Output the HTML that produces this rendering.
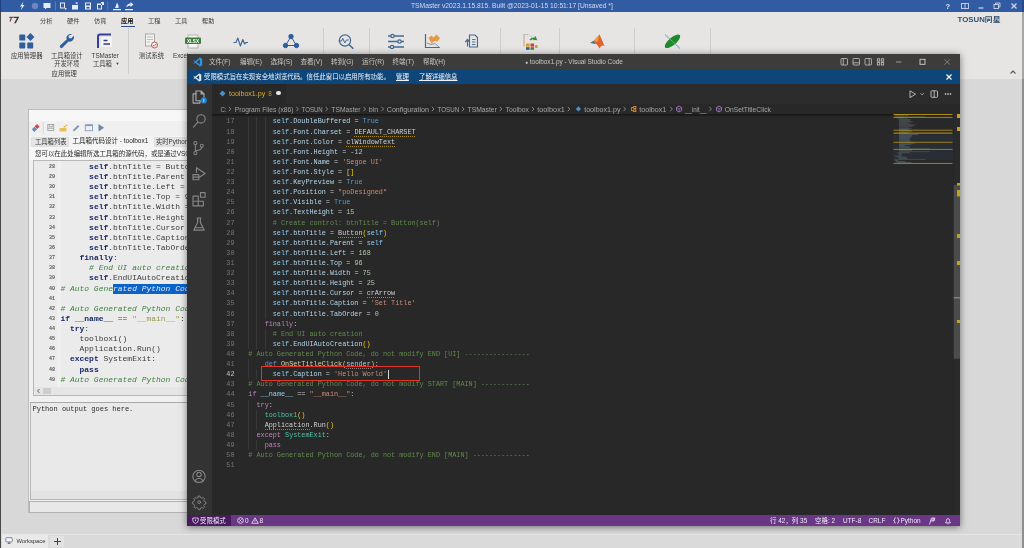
<!DOCTYPE html>
<html><head><meta charset="utf-8">
<style>
*{box-sizing:border-box;margin:0;padding:0}
html,body{width:1024px;height:548px;overflow:hidden;background:#d8d8d8;font-family:"Liberation Sans","Noto Sans CJK SC",sans-serif;}
.abs,.abs>*{position:absolute}
span{white-space:nowrap}
#ts-title{left:0;top:0;width:1024px;height:12px;box-shadow:0 -6px 0 #315ba3,6px -6px 0 #315ba3,-6px -6px 0 #315ba3,6px 0 0 #315ba3,-6px 0 0 #315ba3;background:#315ba3;color:#d4dcee;font-size:6.73px;line-height:12px}
#ts-menu{left:0;top:12px;width:1024px;height:67px;background:#e6e5e3}
.mi{position:absolute;top:15.600px;font-size:6.2px;color:#3a3a3a;line-height:10px}
.rl{position:absolute;font-size:6.3px;color:#3a3a3a;line-height:8px;text-align:center;white-space:nowrap;transform:translateX(-50%)}
.sep{position:absolute;width:1px;background:#cfcecc;top:28px;height:46px}
#ws{left:0;top:79px;width:1024px;height:455px;background:#d8d8d8}
#bottom{left:0;top:534px;width:1024px;height:14px;background:#dadada}
/* inner window */
#inner{left:28px;top:109px;width:900px;height:404px;background:#f0f0f0;border:1px solid #bdbdbd}
.code1{position:absolute;left:60.4px;font-family:"Liberation Mono",monospace;font-size:7.98px;line-height:10.1px;height:10.1px;white-space:pre;color:#3c3c3c}
.code1 b{color:#1c2a66}
.cm{color:#3f7f3f;font-style:italic}
.st{color:#9a9a50}
.un{text-decoration:underline;text-decoration-color:#2a3a9a}
.sel{background:#0a63c9;color:#dfe8f5;display:inline-block;height:10.1px}
.ln1{position:absolute;left:36px;font-family:"Liberation Mono",monospace;font-size:5px;font-weight:bold;line-height:10.1px;color:#555;text-align:right;width:19px}
/* vscode */
#vs{left:187px;top:54px;width:773px;height:472px;background:#282828;box-shadow:0 1px 7px rgba(0,0,0,.5)}
#vs-title{left:0;top:0;width:773px;height:16px;background:#3c3c3c;color:#c8c8c8;font-size:6.55px;line-height:16px}
#vs-banner{left:0;top:16px;width:773px;height:13.5px;background:#0f4679;color:#f0f4f8;font-size:6.41px;line-height:13.5px}
#vs-act{left:0;top:29.5px;width:25px;height:431.500px;background:#333333}
#vs-tabs{left:25px;top:29.5px;width:748px;height:20px;background:#2c2c2c}
#vs-bc{left:25px;top:49.5px;width:748px;height:11px;background:#282828;color:#a4a4a4;font-size:6.92px;line-height:11px;white-space:nowrap}
#vs-status{left:0;top:460.800px;width:773px;height:11.200px;background:#6a3787;color:#f2eaf6;font-size:6.45px;line-height:11.400px}
.vcode{position:absolute;left:61.3px;font-family:"Liberation Mono",monospace;font-size:6.81px;line-height:10.11px;height:10.11px;white-space:pre;color:#cfcfcf}
.vln{position:absolute;left:27px;font-family:"Liberation Mono",monospace;font-size:6.81px;line-height:10.11px;color:#767676;text-align:right;width:20.5px;white-space:pre}
.vln.cur{color:#c6c6c6}
.s{color:#8fcdf4}.p{color:#b4d6ea}.k{color:#c080bc}.c{color:#608a4c}.t{color:#5596cf}.str{color:#c98d74}.n{color:#b0c8a4}.y{color:#f2cc10}.f{color:#d6d6a4}.cl{color:#4cc2aa}
.u{background:repeating-linear-gradient(90deg,#a88a10 0 1px,transparent 1px 2px) 0 100%/100% 1px no-repeat;padding-bottom:1px}
.u2{background:repeating-linear-gradient(90deg,#808080 0 1px,transparent 1px 2px) 0 100%/100% 1px no-repeat;padding-bottom:1px}
.guide{position:absolute;width:1px;background:#383838}
#root{position:absolute;left:-6px;top:-6px;width:1036px;height:560px;overflow:hidden;filter:blur(.35px);background:#d8d8d8}
#pg{position:absolute;left:6px;top:6px;width:1024px;height:548px}
</style></head><body><div id="root"><div id="pg">
<!-- ======== TSMaster main ======== -->
<div id="ts-title" class="abs"><span style="left:411px">TSMaster v2023.1.15.815. Built @2023-01-15 10:51:17 [Unsaved *]</span>
<svg style="left:0;top:0" width="140" height="12" viewBox="0 0 140 12" fill="#e4eaf6">
<path d="M23.5 1.5 L20 6.5 H22 L20.5 10.5 L24.5 5 H22.4 Z"/>
<circle cx="35" cy="6" r="3.2" fill="#6c86c0"/>
<path d="M43.5 3 h7 v5 h-4 l-1.5 1.6 v-1.6 h-1.5 Z"/>
<rect x="55" y="1.5" width=".7" height="9" fill="#6f89c2"/>
<path d="M60 2.5 h5 v6 h-5 Z M61 3.5 v4 h3 v-4 Z M65 8 h1.5 v1.5 H65 Z"/>
<path d="M72 5 h6 v4.5 h-6 Z M75 3 l2.5 -1 v2.5 Z"/>
<path d="M85 2.5 h6 v7 h-6 Z M86 3.5 v2 h4 v-2 Z M86.5 7 v1.5 h3 V7 Z" fill-rule="evenodd"/>
<path d="M97 3.5 h5 v6 h-5 Z M98 5 v3.5 h3 V5 Z M101 2 h3 v3 h-3 Z" fill-rule="evenodd"/>
<rect x="107.5" y="1.5" width=".7" height="9" fill="#6f89c2"/>
<path d="M113 9 h8 v1.2 h-8 Z M115 8 l2 -5.5 l1.5 3 v2.5 Z"/>
<path d="M125 9 h8 v1.2 h-8 Z M126 7.5 q1 -4 4.5 -4 v-1.5 l3 2.5 l-3 2.5 v-1.5 q-2.5 0 -4.5 2 Z"/>
</svg>
<svg style="left:936px;top:0" width="88" height="12" viewBox="936 0 88 12" fill="none" stroke="#cdd7ec" stroke-width=".9">
<text x="945.5" y="9" font-size="7.5" font-weight="bold" fill="#e4eaf6" stroke="none" font-family="Liberation Sans, sans-serif">?</text>
<rect x="961.5" y="3.5" width="7" height="5"/><path d="M965 3.5 v5"/>
<path d="M978.5 8 h5" stroke-width="1.2"/>
<rect x="994" y="4.5" width="4.5" height="4"/><path d="M995.5 4.5 v-1.5 h4.5 v4 h-1.5"/>
<path d="M1011.5 3.5 l5 5 M1016.5 3.5 l-5 5" stroke-width="1.3"/>
</svg>
</div>
<div id="ts-menu" class="abs"></div>
<svg class="abs" style="left:8px;top:14px" width="16" height="12" viewBox="0 0 16 12"><path d="M1.500 2.700 h4 l-.4 1.200 h-1.200 l-1.100 3.600 h-1.300 l1.100 -3.600 h-1.500 Z" fill="#7a4644"/><path d="M5.800 2.700 h5.500 l-3.500 6.600 h-1.700 l2.800 -5.300 h-3.500 Z" fill="#3a3a3a"/></svg>
<span class="mi" style="left:40px">分析</span><span class="mi" style="left:67px">硬件</span><span class="mi" style="left:94px">仿真</span><span class="mi" style="left:121px;color:#111;font-weight:bold">应用</span><span class="mi" style="left:148px">工程</span><span class="mi" style="left:175px">工具</span><span class="mi" style="left:202px">帮助</span>
<div class="abs" style="left:120.5px;top:26px;width:14px;height:1.3px;background:#2f4c8e"></div>
<!-- ribbon icons -->
<svg class="abs" style="left:0;top:28.900px" width="1024" height="26" viewBox="0 28 1024 26">
<g fill="#2f5f9a" transform="translate(26.300 39.500) scale(1.060) translate(-26.100 -39.100)"><rect x="19.5" y="33.5" width="5.6" height="5.6" rx=".8"/><rect x="19.5" y="41" width="5.6" height="5.6" rx=".8"/><rect x="27" y="41" width="5.6" height="5.6" rx=".8"/><path d="M30 32 l3.8 3.8 l-3.8 3.8 l-3.8 -3.8 Z"/></g>
<path d="M72.2 33.2 a4.3 4.3 0 0 0 -5.6 5.3 l-6.3 5.8 a1.6 1.6 0 0 0 2.3 2.3 l5.9 -6.2 a4.3 4.3 0 0 0 5.3 -5.6 l-2.7 2.7 l-2.1 -.6 l-.6 -2.1 Z" fill="#2f5f9a"/>
<g transform="translate(1 0)"><path d="M97 47 V35.5 a2 2 0 0 1 2 -2 H110" fill="none" stroke="#3340a0" stroke-width="2"/><rect x="100" y="36" width="11" height="10" rx="1" fill="#f4f4f8"/><path d="M102.5 39.5 h4 M102.5 43 h6.5" stroke="#333c7a" stroke-width="1.3"/></g>
<g><rect x="145.5" y="33" width="9" height="12" fill="#f2f2f0" stroke="#9a9a98" stroke-width=".8"/><path d="M147 36 h6 M147 38.5 h6 M147 41 h3" stroke="#aaa" stroke-width=".7"/><circle cx="154.5" cy="44" r="3" fill="#f2f2f0" stroke="#c0463a" stroke-width=".9"/><path d="M153 44 l1.2 1.2 l2 -2.3" stroke="#c0463a" stroke-width=".8" fill="none"/></g>
<g><rect x="188" y="34" width="10" height="13" fill="#f4f4f2" stroke="#9a9a98" stroke-width=".7"/><rect x="185" y="36.5" width="16" height="6.5" rx="1" fill="#3f7d3d"/><text x="193" y="41.8" font-size="4.6" font-weight="bold" fill="#fff" text-anchor="middle" font-family="Liberation Sans, sans-serif">XLSX</text></g>
<path d="M233.5 41.5 h2.5 l1.8 -4.5 l2.6 8 l2.4 -6.5 l1.8 4.5 l1.4 -1.5 h2" fill="none" stroke="#3f6690" stroke-width="1.150" stroke-linejoin="round"/>
<g stroke="#2f5f9a" stroke-width="1" fill="#2f5f9a"><path d="M291 35.5 L285.5 44.5 H296.5 Z" fill="none"/><circle cx="291" cy="35.5" r="2.2"/><circle cx="285.5" cy="44.5" r="2.2"/><circle cx="296.5" cy="44.5" r="2.2"/></g>
<g fill="none" stroke="#456a92" stroke-width="1.2"><circle cx="345" cy="39.5" r="5.6"/><path d="M349.3 43.8 l4 4" stroke-width="1.6"/><path d="M338.5 40 h3 l1.3 -2.6 l2 4.6 l1.6 -3 h2.4" stroke-width="1"/></g>
<g stroke="#456a92" stroke-width="1.3" fill="#e6e5e3"><path d="M388 35 h16 M388 40.5 h16 M388 46 h16"/><circle cx="392.5" cy="35" r="1.7"/><circle cx="399.5" cy="40.5" r="1.7"/><circle cx="392" cy="46" r="1.7"/></g>
<g><path d="M425.5 33 v13.5 h14.5" fill="none" stroke="#456a92" stroke-width="1.2"/><path d="M428.5 37 l3 -2.5 l2 2 l3 -3 l3.5 3.5 l-2.5 3.5 l-3 -.5 l-3 2.5 Z" fill="#e69a48"/><path d="M427 42 l4 1.5 l4 -1 l4.5 4" fill="none" stroke="#7d93b8" stroke-width="1"/></g>
<g fill="none" stroke="#456a92" stroke-width="1.1"><path d="M469.5 34 h5.5 l2.5 2.5 v9.5 h-8 Z"/><path d="M472 38.5 h3.5 M472 41 h3.5 M472 43.5 h3.5" stroke-width=".9"/><path d="M467.500 45.500 v-6 M465.200 41.200 L467.500 38.500 l2.300 2.700" stroke-width="1.200"/></g>
<g><path d="M524 33.5 h5 l2.5 2.5 v4" fill="none" stroke="#a0a09e" stroke-width=".8" stroke-dasharray="1.5 1"/><path d="M524 33.5 v12" fill="none" stroke="#c98a6a" stroke-width=".8"/><path d="M530 39 q3 -3 6 -1 l-1 -2.5 M536 38 l-2.7 .6" stroke="#3d8a3a" stroke-width="1.4" fill="none"/><rect x="526" y="42.5" width="3.6" height="3.2" fill="#d0a030"/><rect x="530.5" y="42.5" width="3.6" height="3.2" fill="#d04040"/><rect x="526" y="46.2" width="3.6" height="2.6" fill="#3a5aa0"/><rect x="530.5" y="46.2" width="3.6" height="2.6" fill="#3a8a3a"/><rect x="535" y="44" width="2.6" height="3" fill="#d0a030"/></g>
<g><path d="M590 42 l4 -2.5 l2 3.5 Z" fill="#4a6a8a"/><path d="M594 39.500 L599.500 33.500 L604.500 45.500 Q601.500 43 599.500 47.500 Q597.500 43.500 596 43 Z" fill="#e2622a"/><path d="M599.500 33.500 L604.500 45.500 Q602 41 599.500 33.500" fill="#b83a1a"/><path d="M594 39.500 L599.500 33.500 L597.500 41 Z" fill="#f0a040"/></g>
<g><path d="M665 33.500 l15 14" stroke="#a4b0d4" stroke-width="1.100"/><ellipse cx="672.500" cy="40.300" rx="9.600" ry="3.700" transform="rotate(-40 672.500 40.300)" fill="#1f8a2c"/><path d="M669 37.200 l7.500 7" stroke="#8fc49a" stroke-width=".6"/></g>
</svg>
<span class="rl" style="left:26.7px;top:52.400px">应用管理器</span>
<span class="rl" style="left:66.8px;top:52.400px">工具箱设计<br>开发环境</span>
<span class="rl" style="left:105.2px;top:52.400px">TSMaster<br>工具箱 <span style="font-size:4px;position:relative;top:-1px;left:2px">▼</span></span>
<span class="rl" style="left:64.2px;top:69.8px">应用管理</span>
<span class="rl" style="left:151.5px;top:52.400px">测试系统</span>
<span class="rl" style="left:173px;top:52.400px;transform:none">Excel</span>
<div class="sep" style="left:128px"></div><div class="sep" style="left:323px"></div><div class="sep" style="left:369px"></div><div class="sep" style="left:500px"></div><div class="sep" style="left:559px"></div><div class="sep" style="left:634px"></div><div class="sep" style="left:710px"></div>
<svg class="abs" style="left:955px;top:13px" width="50" height="12" viewBox="955 13 50 12"><text x="957.5" y="21.6" font-size="7" font-weight="bold" fill="#34506e" font-family="Liberation Sans, Noto Sans CJK SC, sans-serif" textLength="43" lengthAdjust="spacingAndGlyphs">TOSUN同星</text></svg>
<svg class="abs" style="left:1008px;top:68px" width="10" height="8" viewBox="0 0 10 8"><path d="M2.500 5.500 L5 3 L7.500 5.500" fill="none" stroke="#555" stroke-width="1.1"/></svg>
<div id="ws" class="abs"></div>
<!-- inner window -->
<div id="inner" class="abs">
 <div style="left:0;top:0;width:898px;height:10.500px;background:#f7f7f7"></div>
</div>
<div class="abs" style="left:29px;top:135.500px;width:160px;height:11px;background:#f4f4f4">
 <div style="left:1.500px;top:1px;width:38px;height:10px;background:#e5e5e5;border:1px solid #dedede"></div>
 <div style="left:124.500px;top:1px;width:60px;height:10px;background:#e5e5e5;border:1px solid #dedede"></div>
 <span style="left:6px;top:1.500px;font-size:6.3px;line-height:9px;color:#333">工具箱列表</span>
 <span style="left:43.500px;top:.5px;font-size:6.5px;line-height:9px;color:#222">工具箱代码设计 - toolbox1</span>
 <span style="left:127px;top:1.500px;font-size:6.3px;line-height:9px;color:#333">实时Python</span>
</div>
<div class="abs" style="left:29px;top:146.500px;width:160px;height:13px;background:#f6f6f6"><span style="left:6px;top:2px;font-size:6.45px;line-height:9px;color:#2a2a2a">您可以在此处编辑所选工具箱的源代码，或是通过VSCode</span></div>
<svg class="abs" style="left:29px;top:121px" width="80" height="14" viewBox="29 121 80 14">
<path d="M31.800 129.300 l2.600 -2.600 l2.600 2.600 l-2.600 2.600 Z" fill="#6a88c4"/><path d="M34.600 126.500 l2.400 -2.400 l2.600 2.600 l-2.400 2.400 Z" fill="#d8444a"/>
<rect x="42.800" y="122" width=".7" height="12" fill="#cacaca"/>
<g fill="none" stroke="#9c9c9c" stroke-width=".8"><rect x="47.800" y="124.500" width="6" height="6"/><path d="M49.300 124.500 v2.300 h3 v-2.300 M47.800 128.300 h6"/></g>
<path d="M59.500 128 h7 v3.500 h-7 Z" fill="#e8c05a"/><path d="M63 127 l2.500 -1.800 v2.600 Z M66 124.800 h1.300 v1.300 h-1.300 Z" fill="#e0aa3a"/>
<path d="M73 131.300 l.6 -2 l4.400 -4.400 l1.400 1.400 l-4.400 4.400 Z" fill="#8498b4"/>
<rect x="85.300" y="124.700" width="7.200" height="6" fill="#eef0f4" stroke="#8a9cb8" stroke-width=".9"/><rect x="85.300" y="124.700" width="7.200" height="1.400" fill="#8a9cb8"/>
<path d="M98.500 124 l5.600 3.800 l-5.600 3.800 Z" fill="#6a88ac"/>
</svg>
<div class="abs" style="left:32.500px;top:159.500px;width:160px;height:236px;background:#ebebeb;border:1px solid #b8b8b8">
 <div style="left:23px;top:0;width:4px;height:226.500px;background:#f0f0f0"></div>
</div>
<div class="ln1" style="top:161.95px">28</div><div class="code1" style="top:161.95px">      <b>self</b>.btnTitle = Button(<b>self</b>)</div>
<div class="ln1" style="top:172.08px">29</div><div class="code1" style="top:172.08px">      <b>self</b>.btnTitle.Parent = <b>self</b></div>
<div class="ln1" style="top:182.21px">30</div><div class="code1" style="top:182.21px">      <b>self</b>.btnTitle.Left = 168</div>
<div class="ln1" style="top:192.34px">31</div><div class="code1" style="top:192.34px">      <b>self</b>.btnTitle.Top = 96</div>
<div class="ln1" style="top:202.47px">32</div><div class="code1" style="top:202.47px">      <b>self</b>.btnTitle.Width = 75</div>
<div class="ln1" style="top:212.60px">33</div><div class="code1" style="top:212.60px">      <b>self</b>.btnTitle.Height = 25</div>
<div class="ln1" style="top:222.73px">34</div><div class="code1" style="top:222.73px">      <b>self</b>.btnTitle.Cursor = crArrow</div>
<div class="ln1" style="top:232.86px">35</div><div class="code1" style="top:232.86px">      <b>self</b>.btnTitle.Caption = 'Set Title'</div>
<div class="ln1" style="top:242.99px">36</div><div class="code1" style="top:242.99px">      <b>self</b>.btnTitle.TabOrder = 0</div>
<div class="ln1" style="top:253.12px">37</div><div class="code1" style="top:253.12px">    <b>finally</b>:</div>
<div class="ln1" style="top:263.25px">38</div><div class="code1" style="top:263.25px">      <span class="cm"># End UI auto creation</span></div>
<div class="ln1" style="top:273.38px">39</div><div class="code1" style="top:273.38px">      <b>self</b>.EndUIAutoCreation()</div>
<div class="ln1" style="top:283.51px">40</div><div class="code1" style="top:283.51px"><span class="cm"># Auto Gene<span class="sel">rated Python Code, do not modify END [UI] ----------------</span></span></div>
<div class="ln1" style="top:293.64px">41</div><div class="code1" style="top:293.64px"></div>
<div class="ln1" style="top:303.77px">42</div><div class="code1" style="top:303.77px"><span class="cm"># Auto Generated Python Code, do not modify START [MAIN] ------------</span></div>
<div class="ln1" style="top:313.90px">43</div><div class="code1" style="top:313.90px"><b>if</b> <b>__name__</b> == <span class="st">"__main__"</span>:</div>
<div class="ln1" style="top:324.03px">44</div><div class="code1" style="top:324.03px">  <b>try</b>:</div>
<div class="ln1" style="top:334.16px">45</div><div class="code1" style="top:334.16px">    toolbox1()</div>
<div class="ln1" style="top:344.29px">46</div><div class="code1" style="top:344.29px">    Application.Run()</div>
<div class="ln1" style="top:354.42px">47</div><div class="code1" style="top:354.42px">  <b>except</b> SystemExit:</div>
<div class="ln1" style="top:364.55px">48</div><div class="code1" style="top:364.55px">    <b>pass</b></div>
<div class="ln1" style="top:374.68px">49</div><div class="code1" style="top:374.68px"><span class="cm"># Auto Generated Python Code, do not modify END [MAIN] --------------</span></div>

<div class="abs" style="left:33.500px;top:387px;width:156px;height:7.500px;background:#e5e5e5"><div style="left:9px;top:.5px;width:8.500px;height:6.500px;background:#cdcdcd"></div><svg style="left:2px;top:1px" width="5" height="6" viewBox="0 0 5 6"><path d="M3.500 1 L1.500 3 L3.500 5" fill="none" stroke="#555" stroke-width=".9"/></svg></div>
<div class="abs" style="left:29.500px;top:401.500px;width:160px;height:98.500px;background:#e9e9e9;border:1px solid #b4b4b4;border-top-color:#a8a8a8">
 <span style="left:2px;top:2.200px;font-family:'Liberation Mono',monospace;font-size:7px;line-height:9px;color:#2a2a2a">Python output goes here.</span>
 <div style="left:0;top:88px;width:158px;height:8.500px;background:#e3e3e3"></div>
</div>
<div class="abs" style="left:28.500px;top:501px;width:160px;height:11.500px;background:#e8e8e8;border:1px solid #b0b0b0;border-right:0"></div>
<!-- bottom tabs -->
<div id="bottom" class="abs">
 <div style="left:0;top:0;width:1024px;height:1px;background:#e6e6e6"></div>
 <div style="left:1.500px;top:1px;width:46.500px;height:13px;background:#e9e9e9"></div>
 <div style="left:50px;top:1.500px;width:14px;height:11px;background:#e2e2e2"></div>
 <svg style="left:4.800px;top:3.200px" width="8.500" height="7.650" viewBox="0 0 10 9"><rect x="1" y=".8" width="7.500" height="5" rx=".8" fill="#f4f6fa" stroke="#5a6a82" stroke-width=".9"/><path d="M3.200 7.500 h3.200 M4.800 6 v1.500" stroke="#4a5568" stroke-width="1"/></svg>
 <span style="left:16.500px;top:2.500px;font-size:5.800px;line-height:9px;color:#333">Workspace</span>
 <svg style="left:52.500px;top:2.500px" width="9" height="9" viewBox="0 0 9 9"><path d="M4.500 1 v7 M1 4.500 h7" stroke="#2f4f3f" stroke-width="1"/></svg>
</div>
<div class="abs" style="left:-6px;top:12px;width:7px;height:542px;background:#484848"></div><div class="abs" style="left:-6px;top:-6px;width:7px;height:18px;background:#1f3f7c"></div>
<div class="abs" style="left:1022.200px;top:12px;width:8px;height:67px;background:#a6a6a6"></div><div class="abs" style="left:1022.200px;top:79px;width:8px;height:475px;background:#8e8e8e"></div><div class="abs" style="left:1022.200px;top:-6px;width:8px;height:18px;background:#27498a"></div>
<!-- ======== VS Code ======== -->
<div id="vs" class="abs">
<div id="vs-title" class="abs">
 <svg style="left:5.500px;top:3px" width="10" height="10" viewBox="0 0 10 10"><path d="M7.300 1.200 L2.500 5 L7.300 8.800" fill="none" stroke="#2f95e0" stroke-width="1.500"/><path d="M6.800 .6 L9.200 1.700 V8.300 L6.800 9.400 Z" fill="#2f95e0"/><path d="M.7 3.600 L2.700 5 L.7 6.400" fill="none" stroke="#2f95e0" stroke-width="1"/></svg>
 <span style="left:22px">文件(F)</span><span style="left:53px">编辑(E)</span><span style="left:83.500px">选择(S)</span><span style="left:113.500px">查看(V)</span><span style="left:144px">转到(G)</span><span style="left:175px">运行(R)</span><span style="left:205.500px">终端(T)</span><span style="left:236px">帮助(H)</span>
 <span style="left:338px;font-size:6.43px"><span style="position:relative;font-size:5px;top:-.5px">●</span> toolbox1.py - Visual Studio Code</span>
 <svg style="left:650px;top:0" width="123" height="16" viewBox="650 0 123 16" fill="none" stroke="#c4c4c4" stroke-width=".8">
  <rect x="654" y="4.500" width="6.500" height="6.500" rx=".8"/><path d="M656.300 4.500 v6.500"/>
  <rect x="666" y="4.500" width="6.500" height="6.500" rx=".8"/><path d="M666 8.800 h6.500"/>
  <rect x="678" y="4.500" width="6.500" height="6.500" rx=".8"/><path d="M682.200 4.500 v6.500"/>
  <rect x="690.300" y="4.800" width="2.400" height="2.400"/><rect x="690.300" y="8.600" width="2.400" height="2.400"/><rect x="694.300" y="4.800" width="2.400" height="2.400"/><rect x="694.300" y="8.600" width="2.400" height="2.400"/>
  <path d="M709 8 h5.500" stroke="#b0b0b0"/><rect x="733" y="5.300" width="5" height="5" stroke="#d0d0d0" stroke-width=".9"/><path d="M757.500 5.300 l5.400 5.400 M762.900 5.300 l-5.400 5.400" stroke="#9a9a9a" stroke-width=".7"/>
 </svg>
</div>
<div id="vs-banner" class="abs">
 <svg style="left:5.500px;top:2.500px" width="9" height="9" viewBox="0 0 10 10"><path d="M7.300 1.200 L2.500 5 L7.300 8.800" fill="none" stroke="#dfe8f2" stroke-width="1.500"/><path d="M6.800 .6 L9.200 1.700 V8.300 L6.800 9.400 Z" fill="#dfe8f2"/><path d="M.7 3.600 L2.700 5 L.7 6.400" fill="none" stroke="#dfe8f2" stroke-width="1"/></svg>
 <span style="left:17px">受限模式旨在实现安全地浏览代码。信任此窗口以启用所有功能。</span>
 <span style="left:209px;text-decoration:underline">管理</span><span style="left:232px;text-decoration:underline">了解详细信息</span>
 <svg style="left:758px;top:3px" width="8" height="8" viewBox="0 0 8 8"><path d="M1.500 1.500 l5 5 M6.500 1.500 l-5 5" stroke="#fff" stroke-width="1.100"/></svg>
</div>
<div id="vs-act" class="abs">
 <svg style="left:0;top:0" width="25" height="431" viewBox="0 0 25 431" fill="none" stroke="#868686" stroke-width="1" stroke-linejoin="round" stroke-linecap="round">
  <g transform="translate(11.600 13.100) scale(1.150) translate(-11.800 -13.300)" stroke="#a8a8a8"><path d="M9.500 8 h4.500 l2.500 2.500 v6 h-7 Z M14 8 v2.500 h2.500"/><path d="M9.500 10.500 h-2.500 v8 h6 v-2"/></g>
  <circle cx="16.800" cy="16.400" r="3.100" fill="#1f7fd4" stroke="none"/><path d="M16.800 15.100 v2.600" stroke="#e8f0fa" stroke-width=".8"/>
  <g transform="translate(11.600 37.900) scale(1.150) translate(-11.200 -38.400)"><circle cx="13.300" cy="35.800" r="3.600"/><path d="M10.700 38.600 l-4 4.400"/></g>
  <g transform="translate(11.600 64.200) scale(1.030) translate(-12.400 -64.200)"><circle cx="9.300" cy="59.300" r="1.500"/><circle cx="9.300" cy="69" r="1.500"/><circle cx="15.500" cy="61.800" r="1.500"/><path d="M9.300 60.800 v6.700 M15.500 63.300 q0 2.700 -6.200 3.400"/></g>
  <g transform="translate(12 89.700) scale(1.150) translate(-12.200 -89.700)"><path d="M10 84.500 l7.500 5 l-5 3.300 M10 84.500 v4"/><path d="M7 90.500 h5 v4.500 h-5 Z M7 92.700 h5"/></g>
  <g transform="translate(12 115.300) scale(1.150) translate(-12.200 -115.300)"><path d="M7 112.500 h4.500 v4.500 h4.500 v4 h-9 Z M7 117 h4.500 v4"/><rect x="13.500" y="109.500" width="4" height="4"/></g>
  <g transform="translate(12 140.100) scale(1.150) translate(-12 -139.800)"><path d="M10.300 134.500 h3.400 M10.800 134.500 v4 l-3.300 6.500 h9 l-3.300 -6.500 v-4 M8.600 143 h6.800"/></g>
  <g transform="translate(12 392.400) scale(1.100) translate(-12 -392.400)"><circle cx="12" cy="392.400" r="5.600"/><circle cx="12" cy="390.600" r="2"/><path d="M8.300 396.300 q3.700 -4.500 7.400 0"/></g>
  <g transform="translate(12.200 418.200)"><circle cx="0" cy="0" r="1.400"/>
  <path d="M-1 -6.300 h2 l.5 1.700 l1.500 .7 l1.600 -.9 l1.400 1.400 l-.9 1.600 l.7 1.500 l1.700 .5 v2 l-1.700 .5 l-.7 1.500 l.9 1.600 l-1.400 1.400 l-1.600 -.9 l-1.500 .7 l-.5 1.700 h-2 l-.5 -1.700 l-1.500 -.7 l-1.600 .9 l-1.400 -1.400 l.9 -1.600 l-.7 -1.500 l-1.700 -.5 v-2 l1.700 -.5 l.7 -1.500 l-.9 -1.600 l1.400 -1.400 l1.600 .9 l1.500 -.7 Z" transform="translate(0 -.4) scale(.9)"/></g>
 </svg>
</div>
<div id="vs-tabs" class="abs">
 <div style="left:0;top:0;width:73.500px;height:20px;background:#282828"></div>
 <svg style="left:6.900px;top:6.200px" width="7" height="7" viewBox="0 0 7 7"><path d="M3.500 .5 L6.500 3.500 L3.500 6.500 L.5 3.500 Z" fill="#4a90c8"/></svg>
 <span style="left:17px;top:0;font-size:7.1px;line-height:20px;color:#d6ac3c">toolbox1.py&nbsp;<span style="position:static;color:#b8962f;font-size:6.300px;margin-left:-.8px"> 8</span></span>
 <div style="left:64.200px;top:7.300px;width:4.600px;height:4.600px;border-radius:50%;background:#e6e6e6"></div>
 <svg style="left:690px;top:3px" width="58" height="14" viewBox="0 0 58 14" fill="none" stroke="#c4c4c4" stroke-width=".9"><path d="M8 3.800 l5.500 3.400 l-5.500 3.400 Z"/><path d="M18.500 6.200 l1.700 1.700 l1.700 -1.700" stroke-width=".8"/><rect x="29" y="3.800" width="6.500" height="6.500" rx=".8"/><path d="M32.200 3.800 v6.500"/><circle cx="43.500" cy="7" r=".5" fill="#c4c4c4"/><circle cx="46" cy="7" r=".5" fill="#c4c4c4"/><circle cx="48.500" cy="7" r=".5" fill="#c4c4c4"/></svg>
</div>
<svg class="abs" style="left:25px;top:49.500px" width="748" height="11" viewBox="212 103.500 748 11" font-family="Liberation Sans, sans-serif" font-size="6.9" fill="#a6a6a6"><text x="220.4" y="111" textLength="6.2" lengthAdjust="spacingAndGlyphs">C:</text><text x="234.8" y="111" textLength="58.6" lengthAdjust="spacingAndGlyphs">Program Files (x86)</text><text x="301.6" y="111" textLength="21.1" lengthAdjust="spacingAndGlyphs">TOSUN</text><text x="331.3" y="111" textLength="29.3" lengthAdjust="spacingAndGlyphs">TSMaster</text><text x="368.8" y="111" textLength="9.4" lengthAdjust="spacingAndGlyphs">bin</text><text x="386.8" y="111" textLength="42.2" lengthAdjust="spacingAndGlyphs">Configuration</text><text x="437.6" y="111" textLength="21.5" lengthAdjust="spacingAndGlyphs">TOSUN</text><text x="467.6" y="111" textLength="29.3" lengthAdjust="spacingAndGlyphs">TSMaster</text><text x="505.5" y="111" textLength="23.4" lengthAdjust="spacingAndGlyphs">Toolbox</text><text x="537.2" y="111" textLength="27.7" lengthAdjust="spacingAndGlyphs">toolbox1</text><path d="M228.8 106.300 l2 2.200 l-2 2.200" fill="none" stroke="#9a9a9a" stroke-width=".8"/><path d="M296.3 106.300 l2 2.200 l-2 2.200" fill="none" stroke="#9a9a9a" stroke-width=".8"/><path d="M325.6 106.300 l2 2.200 l-2 2.200" fill="none" stroke="#9a9a9a" stroke-width=".8"/><path d="M363.5 106.300 l2 2.200 l-2 2.200" fill="none" stroke="#9a9a9a" stroke-width=".8"/><path d="M381.5 106.300 l2 2.200 l-2 2.200" fill="none" stroke="#9a9a9a" stroke-width=".8"/><path d="M431.9 106.300 l2 2.200 l-2 2.200" fill="none" stroke="#9a9a9a" stroke-width=".8"/><path d="M462.0 106.300 l2 2.200 l-2 2.200" fill="none" stroke="#9a9a9a" stroke-width=".8"/><path d="M499.8 106.300 l2 2.200 l-2 2.200" fill="none" stroke="#9a9a9a" stroke-width=".8"/><path d="M531.9 106.300 l2 2.200 l-2 2.200" fill="none" stroke="#9a9a9a" stroke-width=".8"/><path d="M567.8 106.300 l2 2.200 l-2 2.200" fill="none" stroke="#9a9a9a" stroke-width=".8"/><text x="584.2" y="111" textLength="36.3" lengthAdjust="spacingAndGlyphs">toolbox1.py</text><text x="639.3" y="111" textLength="27.0" lengthAdjust="spacingAndGlyphs">toolbox1</text><text x="685.0" y="111" textLength="21.5" lengthAdjust="spacingAndGlyphs">__init__</text><text x="724.8" y="111" textLength="46.1" lengthAdjust="spacingAndGlyphs">OnSetTitleClick</text><path d="M623.5 106.300 l2 2.200 l-2 2.200" fill="none" stroke="#9a9a9a" stroke-width=".8"/><path d="M670.3 106.300 l2 2.200 l-2 2.200" fill="none" stroke="#9a9a9a" stroke-width=".8"/><path d="M709.4 106.300 l2 2.200 l-2 2.200" fill="none" stroke="#9a9a9a" stroke-width=".8"/><path d="M578.4 105.800 l2.600 2.600 l-2.600 2.600 l-2.600 -2.600 Z" fill="#4a90c8"/><g fill="none" stroke="#e08a30" stroke-width=".9"><rect x="633.7" y="106" width="2.200" height="2"/><rect x="633.7" y="109.300" width="2.200" height="1.800"/><path d="M633.7 107 h-2.300 v3.200 h2.300"/></g><g fill="none" stroke="#b180d7" stroke-width=".8"><path d="M679.1 105.600 l2.600 1.400 v3 l-2.600 1.400 l-2.600 -1.400 v-3 Z"/><path d="M676.7 107.200 l2.400 1.300 l2.400 -1.300 M679.1 108.500 v2.700" stroke-width=".6"/></g><g fill="none" stroke="#b180d7" stroke-width=".8"><path d="M719.0 105.600 l2.600 1.400 v3 l-2.600 1.400 l-2.600 -1.400 v-3 Z"/><path d="M716.6 107.200 l2.400 1.300 l2.400 -1.300 M719.0 108.500 v2.700" stroke-width=".6"/></g></svg>
<div class="abs" style="left:25px;top:60.300px;width:741px;height:3px;background:linear-gradient(rgba(0,0,0,.5),rgba(0,0,0,0))"></div>
<div class="guide" style="left:61.300px;top:62.500px;height:232.500px"></div>
<div class="guide" style="left:69.400px;top:62.500px;height:232.500px"></div>
<div class="guide" style="left:77.500px;top:62.500px;height:202.200px"></div>
<div class="guide" style="left:77.500px;top:274.800px;height:20.200px"></div>
<div class="guide" style="left:61.300px;top:305.100px;height:20.200px"></div>
<div class="guide" style="left:69.400px;top:315.200px;height:10.100px"></div>
<div class="guide" style="left:61.300px;top:345.600px;height:50.500px"></div>
<div class="guide" style="left:69.400px;top:355.700px;height:20.200px"></div>
<div class="guide" style="left:69.400px;top:386px;height:10.100px"></div>
<div class="vln" style="top:62.45px">17</div><div class="vcode" style="top:62.45px">      <span class="s">self</span><span class="p">.DoubleBuffered</span> = <span class="t">True</span></div>
<div class="vln" style="top:72.56px">18</div><div class="vcode" style="top:72.56px">      <span class="s">self</span><span class="p">.Font.Charset</span> = <span class="u">DEFAULT_CHARSET</span></div>
<div class="vln" style="top:82.67px">19</div><div class="vcode" style="top:82.67px">      <span class="s">self</span><span class="p">.Font.Color</span> = <span class="u">clWindowText</span></div>
<div class="vln" style="top:92.78px">20</div><div class="vcode" style="top:92.78px">      <span class="s">self</span><span class="p">.Font.Height</span> = -<span class="n">12</span></div>
<div class="vln" style="top:102.89px">21</div><div class="vcode" style="top:102.89px">      <span class="s">self</span><span class="p">.Font.Name</span> = <span class="str">'Segoe UI'</span></div>
<div class="vln" style="top:113.00px">22</div><div class="vcode" style="top:113.00px">      <span class="s">self</span><span class="p">.Font.Style</span> = <span class="y">[]</span></div>
<div class="vln" style="top:123.11px">23</div><div class="vcode" style="top:123.11px">      <span class="s">self</span><span class="p">.KeyPreview</span> = <span class="t">True</span></div>
<div class="vln" style="top:133.22px">24</div><div class="vcode" style="top:133.22px">      <span class="s">self</span><span class="p">.Position</span> = <span class="str">"poDesigned"</span></div>
<div class="vln" style="top:143.33px">25</div><div class="vcode" style="top:143.33px">      <span class="s">self</span><span class="p">.Visible</span> = <span class="t">True</span></div>
<div class="vln" style="top:153.44px">26</div><div class="vcode" style="top:153.44px">      <span class="s">self</span><span class="p">.TextHeight</span> = <span class="n">15</span></div>
<div class="vln" style="top:163.55px">27</div><div class="vcode" style="top:163.55px">      <span class="c"># Create control: btnTitle = Button(self)</span></div>
<div class="vln" style="top:173.66px">28</div><div class="vcode" style="top:173.66px">      <span class="s">self</span><span class="p">.btnTitle</span> = <span class="u">Button</span><span class="y">(</span><span class="s">self</span><span class="y">)</span></div>
<div class="vln" style="top:183.77px">29</div><div class="vcode" style="top:183.77px">      <span class="s">self</span><span class="p">.btnTitle.Parent</span> = <span class="s">self</span></div>
<div class="vln" style="top:193.88px">30</div><div class="vcode" style="top:193.88px">      <span class="s">self</span><span class="p">.btnTitle.Left</span> = <span class="n">168</span></div>
<div class="vln" style="top:203.99px">31</div><div class="vcode" style="top:203.99px">      <span class="s">self</span><span class="p">.btnTitle.Top</span> = <span class="n">96</span></div>
<div class="vln" style="top:214.10px">32</div><div class="vcode" style="top:214.10px">      <span class="s">self</span><span class="p">.btnTitle.Width</span> = <span class="n">75</span></div>
<div class="vln" style="top:224.21px">33</div><div class="vcode" style="top:224.21px">      <span class="s">self</span><span class="p">.btnTitle.Height</span> = <span class="n">25</span></div>
<div class="vln" style="top:234.32px">34</div><div class="vcode" style="top:234.32px">      <span class="s">self</span><span class="p">.btnTitle.Cursor</span> = <span class="u">crArrow</span></div>
<div class="vln" style="top:244.43px">35</div><div class="vcode" style="top:244.43px">      <span class="s">self</span><span class="p">.btnTitle.Caption</span> = <span class="str">'Set Title'</span></div>
<div class="vln" style="top:254.54px">36</div><div class="vcode" style="top:254.54px">      <span class="s">self</span><span class="p">.btnTitle.TabOrder</span> = <span class="n">0</span></div>
<div class="vln" style="top:264.65px">37</div><div class="vcode" style="top:264.65px">    <span class="k">finally</span>:</div>
<div class="vln" style="top:274.76px">38</div><div class="vcode" style="top:274.76px">      <span class="c"># End UI auto creation</span></div>
<div class="vln" style="top:284.87px">39</div><div class="vcode" style="top:284.87px">      <span class="s">self</span><span class="p">.EndUIAutoCreation</span><span class="y">()</span></div>
<div class="vln" style="top:294.98px">40</div><div class="vcode" style="top:294.98px"><span class="c"># Auto Generated Python Code, do not modify END [UI] ----------------</span></div>
<div class="vln" style="top:305.09px">41</div><div class="vcode" style="top:305.09px">    <span class="t">def</span> <span class="f">OnSetTitleClick</span><span class="y">(</span><span class="s u2">sender</span><span class="y">)</span>:</div>
<div class="vln cur" style="top:315.20px">42</div><div class="vcode" style="top:315.20px">      <span class="s">self</span><span class="p">.Caption</span> = <span class="str">'Hello World'</span></div>
<div class="vln" style="top:325.31px">43</div><div class="vcode" style="top:325.31px"><span class="c"># Auto Generated Python Code, do not modify START [MAIN] ------------</span></div>
<div class="vln" style="top:335.42px">44</div><div class="vcode" style="top:335.42px"><span class="k">if</span> <span class="s">__name__</span> == <span class="str">"__main__"</span>:</div>
<div class="vln" style="top:345.53px">45</div><div class="vcode" style="top:345.53px">  <span class="k">try</span>:</div>
<div class="vln" style="top:355.64px">46</div><div class="vcode" style="top:355.64px">    <span class="cl">toolbox1</span><span class="y">()</span></div>
<div class="vln" style="top:365.75px">47</div><div class="vcode" style="top:365.75px">    <span class="u">Application</span>.Run<span class="y">()</span></div>
<div class="vln" style="top:375.86px">48</div><div class="vcode" style="top:375.86px">  <span class="k">except</span> <span class="cl">SystemExit</span>:</div>
<div class="vln" style="top:385.97px">49</div><div class="vcode" style="top:385.97px">    <span class="k">pass</span></div>
<div class="vln" style="top:396.08px">50</div><div class="vcode" style="top:396.08px"><span class="c"># Auto Generated Python Code, do not modify END [MAIN] --------------</span></div>
<div class="vln" style="top:406.19px">51</div><div class="vcode" style="top:406.19px"></div>

<div class="abs" style="left:73.500px;top:312.400px;width:159px;height:15px;border:1.700px solid #e23420"></div>
<div class="abs" style="left:201.300px;top:316.300px;width:.8px;height:8.500px;background:#d8d8d8"></div>
<!-- minimap -->
<svg class="abs" style="left:700px;top:55px" width="73" height="410" viewBox="887 109 73 410">
<rect x="893" y="134.500" width="60" height="26" fill="#2a3340" opacity=".5"/>
<rect x="894.5" y="114.00" width="9.3" height=".7" fill="#7f9bb0" opacity=".5"/>
<rect x="894.5" y="115.07" width="13.9" height=".7" fill="#6f8fa8" opacity=".5"/>
<rect x="894.5" y="116.14" width="31.0" height=".7" fill="#5f7f5a" opacity=".5"/>
<rect x="896.0" y="117.21" width="7.4" height=".7" fill="#7f9bb0" opacity=".5"/>
<rect x="897.5" y="118.28" width="10.2" height=".7" fill="#5f7f5a" opacity=".5"/>
<rect x="899.0" y="119.35" width="12.1" height=".7" fill="#6f8fa8" opacity=".5"/>
<rect x="899.0" y="120.42" width="11.2" height=".7" fill="#8a8a8a" opacity=".5"/>
<rect x="899.0" y="121.49" width="13.9" height=".7" fill="#6f8fa8" opacity=".5"/>
<rect x="899.0" y="122.56" width="9.3" height=".7" fill="#6f8fa8" opacity=".5"/>
<rect x="899.0" y="123.63" width="12.1" height=".7" fill="#6f8fa8" opacity=".5"/>
<rect x="899.0" y="124.70" width="16.2" height=".7" fill="#6f8fa8" opacity=".5"/>
<rect x="899.0" y="125.77" width="13.9" height=".7" fill="#8a8a8a" opacity=".5"/>
<rect x="899.0" y="126.84" width="10.2" height=".7" fill="#5f7f5a" opacity=".5"/>
<rect x="899.0" y="127.91" width="12.5" height=".7" fill="#6f8fa8" opacity=".5"/>
<rect x="899.0" y="128.98" width="9.3" height=".7" fill="#7f9bb0" opacity=".5"/>
<rect x="899.0" y="130.05" width="12.1" height=".7" fill="#7f9bb0" opacity=".5"/>
<rect x="899.0" y="131.12" width="13.0" height=".7" fill="#8a8a8a" opacity=".5"/>
<rect x="899.0" y="132.19" width="8.8" height=".7" fill="#6f8fa8" opacity=".5"/>
<rect x="899.0" y="133.26" width="10.7" height=".7" fill="#6f8fa8" opacity=".5"/>
<rect x="899.0" y="134.33" width="19.1" height=".7" fill="#8a8a8a" opacity=".5"/>
<rect x="899.0" y="135.40" width="13.0" height=".7" fill="#8a8a8a" opacity=".5"/>
<rect x="899.0" y="136.47" width="12.5" height=".7" fill="#7f9bb0" opacity=".5"/>
<rect x="899.0" y="137.54" width="11.2" height=".7" fill="#7f9bb0" opacity=".5"/>
<rect x="899.0" y="138.61" width="10.2" height=".7" fill="#7f9bb0" opacity=".5"/>
<rect x="899.0" y="139.68" width="10.7" height=".7" fill="#6f8fa8" opacity=".5"/>
<rect x="899.0" y="140.75" width="11.7" height=".7" fill="#8a8a8a" opacity=".5"/>
<rect x="899.0" y="141.82" width="13.9" height=".7" fill="#6f8fa8" opacity=".5"/>
<rect x="899.0" y="142.89" width="16.2" height=".7" fill="#6f8fa8" opacity=".5"/>
<rect x="899.0" y="143.96" width="12.1" height=".7" fill="#7f9bb0" opacity=".5"/>
<rect x="899.0" y="145.03" width="5.6" height=".7" fill="#6f8fa8" opacity=".5"/>
<rect x="899.0" y="146.10" width="10.2" height=".7" fill="#6f8fa8" opacity=".5"/>
<rect x="899.0" y="147.17" width="11.2" height=".7" fill="#5f7f5a" opacity=".5"/>
<rect x="899.0" y="148.24" width="31.0" height=".7" fill="#5f7f5a" opacity=".5"/>
<rect x="899.0" y="149.31" width="13.0" height=".7" fill="#5f7f5a" opacity=".5"/>
<rect x="899.0" y="150.38" width="13.0" height=".7" fill="#8a8a8a" opacity=".5"/>
<rect x="899.0" y="151.45" width="31.0" height=".7" fill="#5f7f5a" opacity=".5"/>
<rect x="897.5" y="152.52" width="12.1" height=".7" fill="#8a8a8a" opacity=".5"/>
<rect x="899.0" y="153.59" width="2.8" height=".7" fill="#8a8a8a" opacity=".5"/>
<rect x="899.0" y="154.66" width="2.8" height=".7" fill="#8a8a8a" opacity=".5"/>
<rect x="894.5" y="155.73" width="6.5" height=".7" fill="#6f8fa8" opacity=".5"/>
<rect x="897.5" y="156.80" width="9.3" height=".7" fill="#8a8a8a" opacity=".5"/>
<rect x="899.0" y="157.87" width="8.4" height=".7" fill="#7f9bb0" opacity=".5"/>
<rect x="894.5" y="158.94" width="31.0" height=".7" fill="#5f7f5a" opacity=".5"/>
<rect x="894.5" y="160.01" width="3.7" height=".7" fill="#6f8fa8" opacity=".5"/>
<rect x="896.0" y="161.08" width="9.3" height=".7" fill="#6f8fa8" opacity=".5"/>
<rect x="897.5" y="162.15" width="13.9" height=".7" fill="#7f9bb0" opacity=".5"/>
<rect x="893.500" y="114.0" width="59" height="1" fill="#c09a10" opacity="0.90"/>
<rect x="893.500" y="116.9" width="59" height="1" fill="#c09a10" opacity="0.80"/>
<rect x="893.500" y="129.7" width="59" height="1" fill="#c09a10" opacity="0.80"/>
<rect x="893.500" y="132.6" width="59" height="1" fill="#c09a10" opacity="1.00"/>
<rect x="893.500" y="141.8" width="59" height="1" fill="#c09a10" opacity="0.75"/>
<rect x="893.500" y="148.9" width="59" height="1" fill="#c09a10" opacity="0.75"/>
<rect x="893.500" y="162.9" width="59" height="1" fill="#c09a10" opacity="0.80"/>
<rect x="953.700" y="113" width="6.300" height="402" fill="#2a2a2a"/>
<rect x="953.700" y="184.800" width="6.300" height="174" fill="#4b4b4b"/>
<rect x="953.700" y="297.300" width="6.300" height="1" fill="#9a9a9a"/>
<rect x="957" y="114" width="3" height="4" fill="#c4a21a"/>
<rect x="957" y="127" width="3" height="4" fill="#c4a21a"/>
<rect x="957" y="183" width="3" height="2.5" fill="#c4a21a"/>
<rect x="957" y="190" width="3" height="6.5" fill="#c4a21a"/>
<rect x="957" y="234" width="3" height="4" fill="#c4a21a"/>
<rect x="957" y="261" width="3" height="4" fill="#c4a21a"/>
<rect x="957" y="320" width="3" height="3" fill="#c4a21a"/>
</svg>
<div id="vs-status" class="abs">
 <div style="left:0;top:0;width:44px;height:11.200px;background:#481b60"></div>
 <svg style="left:5px;top:2.500px" width="7" height="7" viewBox="0 0 7 7" fill="none" stroke="#f2eaf6" stroke-width=".8"><path d="M.8 1 h5.400 v2.500 q0 2 -2.700 3 q-2.700 -1 -2.700 -3 Z"/><path d="M3.500 2.500 v1.800"/></svg>
 <span style="left:13px">受限模式</span>
 <svg style="left:49.500px;top:2.500px" width="7" height="7" viewBox="0 0 7 7" fill="none" stroke="#f2eaf6" stroke-width=".8"><circle cx="3.500" cy="3.500" r="2.900"/><path d="M2.300 2.300 l2.400 2.400 M4.700 2.300 l-2.400 2.400"/></svg>
 <span style="left:58px">0</span>
 <svg style="left:63.500px;top:2.500px" width="8" height="7" viewBox="0 0 8 7" fill="none" stroke="#f2eaf6" stroke-width=".8"><path d="M4 .8 L7.300 6.300 H.7 Z"/><path d="M4 2.800 v1.800"/></svg>
 <span style="left:72.500px">8</span>
 <span style="left:583px">行 42，列 35</span><span style="left:628px">空格: 2</span><span style="left:656px">UTF-8</span><span style="left:681.500px">CRLF</span><svg style="left:705.500px;top:2.700px" width="7" height="7" viewBox="0 0 7 7" fill="none" stroke="#f2eaf6" stroke-width=".8"><path d="M2.800 .8 q-1.300 0 -1.300 1.100 v.8 q0 .8 -.9 .8 q.9 0 .9 .8 v.8 q0 1.100 1.300 1.100 M4.200 .8 q1.300 0 1.300 1.100 v.8 q0 .8 .9 .8 q-.9 0 -.9 .8 v.8 q0 1.100 -1.300 1.100"/></svg><span style="left:713.500px">Python</span>
 <svg style="left:741px;top:2.500px" width="8" height="8" viewBox="0 0 8 8" fill="none" stroke="#f2eaf6" stroke-width=".8"><path d="M1.500 7.500 L3.500 1 h3.500 l-1 3 h-3.300"/><circle cx="5" cy="2.600" r=".9"/></svg>
 <svg style="left:757px;top:2.500px" width="8" height="8" viewBox="0 0 8 8" fill="none" stroke="#f2eaf6" stroke-width=".8"><path d="M1.500 5.800 q1 -.8 1 -2.600 a1.500 1.500 0 0 1 3 0 q0 1.800 1 2.600 Z M3.400 6.800 h1.200"/></svg>
</div>
</div>
</div></div></body></html>
